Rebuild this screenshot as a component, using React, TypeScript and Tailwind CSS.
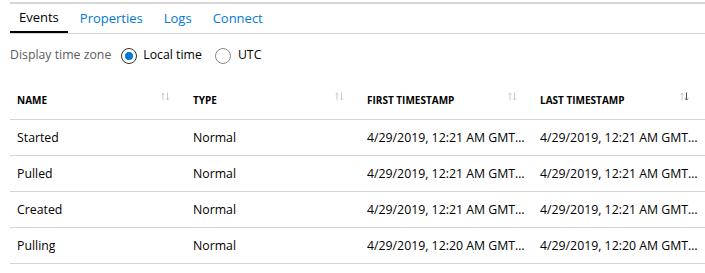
import React from "react";

const font = { fontFamily: '"Open Sans", "Noto Sans", sans-serif' };

function SortIcon({ desc }: { desc?: boolean }) {
  return (
    <svg width="9" height="9" viewBox="0 0 9 9" className="shrink-0">
      <g fill="none" strokeWidth="1">
        <path d="M2 8.5V1M0.5 2.5L2 1l1.5 1.5" stroke="#c8c8c8" />
        <path d="M6.5 0.5V8M5 6.5L6.5 8 8 6.5" stroke={desc ? "#505050" : "#c8c8c8"} />
      </g>
    </svg>
  );
}

const cols = ["w-[176px]", "w-[174px]", "w-[173px]", "w-[172px]"];
const headers = ["NAME", "TYPE", "FIRST TIMESTAMP", "LAST TIMESTAMP"];

const rows = [
  ["Started", "Normal", "4/29/2019, 12:21 AM GMT…", "4/29/2019, 12:21 AM GMT…"],
  ["Pulled", "Normal", "4/29/2019, 12:21 AM GMT…", "4/29/2019, 12:21 AM GMT…"],
  ["Created", "Normal", "4/29/2019, 12:21 AM GMT…", "4/29/2019, 12:21 AM GMT…"],
  ["Pulling", "Normal", "4/29/2019, 12:20 AM GMT…", "4/29/2019, 12:20 AM GMT…"],
];

export default function App() {
  return (
    <div className="w-[705px] h-[273px] bg-white pl-[10px] overflow-hidden text-[#323130]" style={font}>
      <div className="h-[2px] mt-[2px] bg-[#d6d6d6]" />
      <div className="flex h-[30px] border-b border-[#d6d6d6] gap-[3px] text-[13px]">
        <div className="h-[29px] px-[9px] flex items-center border-b-2 border-black text-[#000]">Events</div>
        <div className="h-[29px] px-[9px] flex items-center text-[#0078d4]">Properties</div>
        <div className="h-[29px] px-[9px] flex items-center text-[#0078d4]">Logs</div>
        <div className="h-[29px] px-[9px] flex items-center text-[#0078d4]">Connect</div>
      </div>
      <div className="flex items-center h-[16px] mt-[13px] pt-[1px] text-[12.3px]">
        <span className="text-[#605e5c] mr-[10px]">Display time zone</span>
        <span className="w-[16px] h-[16px] rounded-full border border-[#323130] flex items-center justify-center">
          <span className="w-[8px] h-[8px] rounded-full bg-[#0078d4]" />
        </span>
        <span className="ml-[6px] mr-[13px] text-[#000]">Local time</span>
        <span className="w-[16px] h-[16px] rounded-full border border-[#8a8886]" />
        <span className="ml-[7px] text-[#000]">UTC</span>
      </div>
      <div className="mt-[18px] w-[695px]">
        <div className="flex h-[39px] border-b border-[#d6d6d6]">
          {headers.map((h, i) => (
            <div key={h} className={`${cols[i]} flex items-center pl-[7px] pr-[16px] justify-between`}>
              <span className="text-[10px] font-bold text-[#000]">{h}</span>
              <span className="mb-[8px]">
                <SortIcon desc={i === 3} />
              </span>
            </div>
          ))}
        </div>
        {rows.map((r, ri) => (
          <div key={ri} className="flex h-[36px] border-b border-[#d6d6d6] text-[12.3px] text-[#000]">
            {r.map((c, i) => (
              <div key={i} className={`${cols[i]} flex items-center pl-[7px] pr-[2px] pt-[2px]`}>
                <span className="whitespace-nowrap overflow-hidden">{c}</span>
              </div>
            ))}
          </div>
        ))}
      </div>
    </div>
  );
}
